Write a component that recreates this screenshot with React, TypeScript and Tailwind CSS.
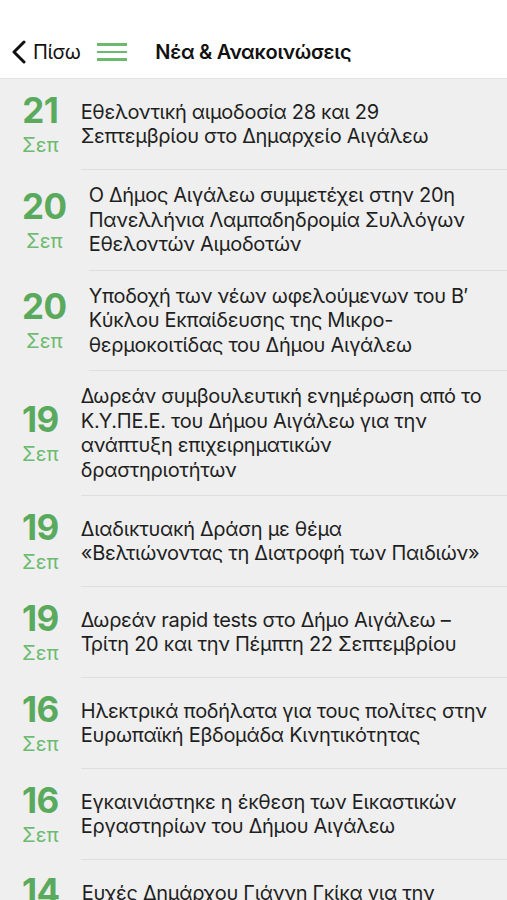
import React from 'react';

type NewsItem = { day: string; month: string; title: string };

const news: NewsItem[] = [
  { day: '21', month: 'Σεπ', title: 'Εθελοντική αιμοδοσία 28 και 29 Σεπτεμβρίου στο Δημαρχείο Αιγάλεω' },
  { day: '20', month: 'Σεπ', title: 'Ο Δήμος Αιγάλεω συμμετέχει στην 20η Πανελλήνια Λαμπαδηδρομία Συλλόγων Εθελοντών Αιμοδοτών' },
  { day: '20', month: 'Σεπ', title: 'Υποδοχή των νέων ωφελούμενων του Β′ Κύκλου Εκπαίδευσης της Μικρο-θερμοκοιτίδας του Δήμου Αιγάλεω' },
  { day: '19', month: 'Σεπ', title: 'Δωρεάν συμβουλευτική ενημέρωση από το Κ.Υ.ΠΕ.Ε. του Δήμου Αιγάλεω για την ανάπτυξη επιχειρηματικών δραστηριοτήτων' },
  { day: '19', month: 'Σεπ', title: 'Διαδικτυακή Δράση με θέμα «Βελτιώνοντας τη Διατροφή των Παιδιών»' },
  { day: '19', month: 'Σεπ', title: 'Δωρεάν rapid tests στο Δήμο Αιγάλεω – Τρίτη 20 και την Πέμπτη 22 Σεπτεμβρίου' },
  { day: '16', month: 'Σεπ', title: 'Ηλεκτρικά ποδήλατα για τους πολίτες στην Ευρωπαϊκή Εβδομάδα Κινητικότητας' },
  { day: '16', month: 'Σεπ', title: 'Εγκαινιάστηκε η έκθεση των Εικαστικών Εργαστηρίων του Δήμου Αιγάλεω' },
  { day: '14', month: 'Σεπ', title: 'Ευχές Δημάρχου Γιάννη Γκίκα για την εορτή του Τιμίου Σταυρού' },
];

const NewsRow = ({ item }: { item: NewsItem }) => (
  <div className="flex items-stretch">
    {/* date column */}
    <div className="flex flex-col items-center justify-center pl-[22px] pr-[22px] py-[13px] shrink-0">
      <span className="text-[35px] leading-[36px] font-bold text-[#5aaa5e] tracking-[-0.5px]">{item.day}</span>
      <span className="text-[20px] leading-[23px] text-[#6dbb70] mt-[6px]">{item.month}</span>
    </div>
    {/* title */}
    <div className="flex-1 flex items-center border-b border-[#dedede] py-[13px] pr-[18px]">
      <p className="text-[20px] leading-[24.5px] text-[#1f1f1f] tracking-[-0.3px]">{item.title}</p>
    </div>
  </div>
);

export default function App() {
  return (
    <div className="w-[507px] h-[900px] overflow-hidden bg-[#efefef]" style={{ fontFamily: 'Inter, "Noto Sans", sans-serif' }}>
      {/* Header */}
      <header className="h-[79px] bg-white border-b border-[#e4e4e4] flex items-end pb-[12px]">
        <div className="flex items-center h-[28px]">
          <div className="flex items-center pl-[11px]">
            <svg width="16" height="24" viewBox="0 0 16 24" fill="none">
              <path d="M13 2 L3 12 L13 22" stroke="#111" strokeWidth="3" strokeLinecap="round" strokeLinejoin="round" />
            </svg>
            <span className="ml-[6px] text-[20px] text-[#111] tracking-[-0.4px]">Πίσω</span>
          </div>
          <div className="ml-[17px] flex flex-col gap-[5px]">
            <span className="block w-[30px] h-[2.5px] bg-[#6ab96e]" />
            <span className="block w-[30px] h-[2.5px] bg-[#6ab96e]" />
            <span className="block w-[30px] h-[2.5px] bg-[#6ab96e]" />
          </div>
          <h1 className="ml-[28px] text-[20px] font-semibold text-[#111] tracking-[-0.3px]">Νέα &amp; Ανακοινώσεις</h1>
        </div>
      </header>

      {/* News list */}
      <div>
        {news.map((item, i) => (
          <NewsRow key={i} item={item} />
        ))}
      </div>
    </div>
  );
}
